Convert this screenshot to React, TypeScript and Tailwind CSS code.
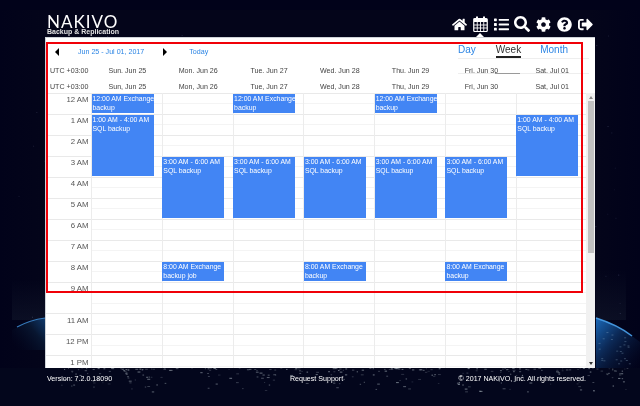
import { FaHome, FaList, FaSearch, FaCog, FaQuestionCircle, FaSignOutAlt } from "react-icons/fa";

const font = { fontFamily: '"Liberation Sans", Arial, sans-serif' };

const days = ["Sun, Jun 25", "Mon, Jun 26", "Tue, Jun 27", "Wed, Jun 28", "Thu, Jun 29", "Fri, Jun 30", "Sat, Jul 01"];
const topDays = ["Sun. Jun 25", "Mon. Jun 26", "Tue. Jun 27", "Wed. Jun 28", "Thu. Jun 29", "Fri. Jun 30", "Sat. Jul 01"];

// row: [label, height in half-hour slots]
const hours: [string, number][] = [
  ["12 AM", 2], ["1 AM", 2], ["2 AM", 2], ["3 AM", 2], ["4 AM", 2], ["5 AM", 2], ["6 AM", 2], ["7 AM", 2], ["8 AM", 2], ["9 AM", 3],
  ["11 AM", 2], ["12 PM", 2], ["1 PM", 2],
];

type Ev = { start: number; span: number; a: string; b: string };
const exch: Ev = { start: 0, span: 2, a: "12:00 AM Exchange", b: "backup" };
const sql1: Ev = { start: 2, span: 6, a: "1:00 AM - 4:00 AM", b: "SQL backup" };
const sql3: Ev = { start: 6, span: 6, a: "3:00 AM - 6:00 AM", b: "SQL backup" };
const ex8: Ev = { start: 16, span: 2, a: "8:00 AM Exchange", b: "backup" };
const events: Ev[][] = [
  [exch, sql1],
  [sql3, { ...ex8, b: "backup job" }],
  [exch, sql3],
  [sql3, ex8],
  [exch, sql3],
  [sql3, ex8],
  [sql1],
];

const SLOT = 10.5;

function seeded(n: number, seed: number) {
  let s = seed;
  const out: number[] = [];
  for (let i = 0; i < n; i++) {
    s = (s * 9301 + 49297) % 233280;
    out.push(s / 233280);
  }
  return out;
}

function CalendarIcon() {
  return (
    <svg width="15" height="16" viewBox="0 0 15 16" fill="none" stroke="white">
      <rect x="0.75" y="2.5" width="13.5" height="13" rx="1" strokeWidth="1.2" />
      <rect x="1" y="3" width="13" height="3" fill="white" stroke="none" />
      <path d="M4 0.5V4M11 0.5V4" strokeWidth="2" />
      <path d="M1 9H14M1 12H14M4.25 6V15M7.5 6V15M10.75 6V15" strokeWidth="0.9" />
    </svg>
  );
}

function Backdrop() {
  const r = seeded(1800, 7);
  const stars = [];
  for (let i = 0; i < 260; i++) {
    const x = r[i * 3] * 640;
    const y = 35 + r[i * 3 + 1] * 300;
    if (x < 18 || x > 622) continue;
    stars.push(<rect key={i} x={x} y={y} width="1" height="1" fill="#8a94b8" opacity={0.1 + r[i * 3 + 2] * 0.2} />);
  }
  const lights = [];
  for (let i = 0; i < 300; i++) {
    const x = 60 + r[900 + i * 2] * 570;
    const y = 368 + r[901 + i * 2] * r[901 + i * 2] * 24;
    if (x > 165 && x < 205 && y > 376) continue;
    lights.push(<rect key={i} x={x} y={y} width={1 + r[i] * 2} height="1" fill="#c6d2d8" opacity={0.15 + r[i + 400] * 0.4} />);
  }
  const sideLights = [];
  for (let i = 0; i < 24; i++) {
    const x = 597 + r[1400 + i * 2] * 35;
    const y = 332 + r[1401 + i * 2] * 36;
    sideLights.push(<rect key={i} x={x} y={y} width="2" height="1" fill="#9fc0dc" opacity={0.3} />);
  }
  return (
    <svg className="absolute inset-0" width="640" height="406" viewBox="0 0 640 406">
      <defs>
        <linearGradient id="earthR" x1="0" y1="0" x2="1" y2="1">
          <stop offset="0" stopColor="#1a68b8" />
          <stop offset="0.4" stopColor="#0c2a58" />
          <stop offset="1" stopColor="#030a24" stopOpacity="0" />
        </linearGradient>
        <linearGradient id="earthL" x1="1" y1="0" x2="0" y2="0.8">
          <stop offset="0" stopColor="#103a6c" />
          <stop offset="0.4" stopColor="#081630" />
          <stop offset="1" stopColor="#030922" stopOpacity="0" />
        </linearGradient>
        <linearGradient id="haze" x1="0" y1="0" x2="0" y2="1">
          <stop offset="0" stopColor="#1b2436" stopOpacity="0" />
          <stop offset="1" stopColor="#1b2436" stopOpacity="0.35" />
        </linearGradient>
        <linearGradient id="side" x1="0" y1="0" x2="1" y2="0">
          <stop offset="0" stopColor="#01021a" />
          <stop offset="0.08" stopColor="#04051a" />
          <stop offset="0.92" stopColor="#04051a" />
          <stop offset="1" stopColor="#01021a" />
        </linearGradient>
      </defs>
      <rect width="640" height="406" fill="#01021a" />
      <rect x="0" y="10" width="640" height="358" fill="url(#side)" />
      <rect x="596" y="270" width="30" height="50" fill="url(#haze)" />
      <rect x="12" y="280" width="33" height="40" fill="url(#haze)" />
      {stars}
      <path d="M596 318 Q620 326 640 342 L640 368 L596 368 Z" fill="url(#earthR)" />
      <path d="M596 318 Q618 325 632 336" fill="none" stroke="#4aa3ee" strokeWidth="1.5" opacity="0.9" />
      <path d="M45 318 Q28 321 12 330 L12 350 L45 350 Z" fill="url(#earthL)" />
      <path d="M45 318 Q30 320 17 327" fill="none" stroke="#3f8fd8" strokeWidth="1.2" opacity="0.85" />
      {sideLights}
      <rect y="368" width="640" height="38" fill="#03061c" />
      {lights}
    </svg>
  );
}

function App() {
  const icons = [FaHome, null, FaList, FaSearch, FaCog, FaQuestionCircle, FaSignOutAlt];
  return (
    <div className="relative w-[640px] h-[406px] overflow-hidden bg-[#01021a] blur-[0.35px]" style={font}>
      <Backdrop />
      <div className="relative flex flex-col h-full px-[45px]">
        {/* Header */}
        <header className="h-[36.5px] flex items-start justify-between shrink-0">
          <div className="pl-[2px] pt-[15px] text-white leading-none">
            <div className="text-[17px] tracking-[1px] leading-[13px] font-normal" style={{ fontFamily: "Lato, sans-serif" }}>NAKIVO</div>
            <div className="text-[7px] font-bold leading-[8px] text-[#e2e2e2]">Backup &amp; Replication</div>
          </div>
          <div className="flex items-center gap-[5px] pt-[16px] pr-[2px] text-white">
            {icons.map((I, i) => (
              <span key={i} className="relative w-[16px] h-[16px] flex items-center justify-center">
                {I ? <I size={i === 3 ? 16 : 15} /> : <CalendarIcon />}
                {i === 1 && (
                  <span className="absolute top-[17px] left-[4px] w-0 h-0 border-l-[4px] border-r-[4px] border-b-[4px] border-l-transparent border-r-transparent border-b-white" />
                )}
              </span>
            ))}
          </div>
        </header>

        {/* Panel */}
        <main className="relative flex flex-col bg-white h-[331.5px] shrink-0 overflow-hidden border-t border-l border-[#cfd3d8]">
          <div className="h-[20px] flex items-center shrink-0 pl-[9px] pt-[9px] text-[#2c85e4] text-[7.1px]">
            <span className="w-0 h-0 border-y-[4px] border-r-[4px] border-y-transparent border-r-black" />
            <span className="ml-[19px]">Jun 25 - Jul 01, 2017</span>
            <span className="ml-[19px] w-0 h-0 border-y-[4px] border-l-[4px] border-y-transparent border-l-black" />
            <span className="ml-[22px]">Today</span>
            <div className="absolute left-[412px] top-[6px] flex items-start text-[10px] leading-[12px]">
              <span>Day</span>
              <span className="ml-[20px] text-[#333] border-b-2 border-[#222]">Week</span>
              <span className="ml-[19px]">Month</span>
            </div>
          </div>
          <div className="ml-[412px] mr-[6px] h-px bg-[#eeeeee] shrink-0" />

          <div className="relative grid grid-cols-[46px_repeat(7,70.8px)] h-[20.5px] pt-[8px] items-start shrink-0 text-[7.1px] leading-[9px] text-[#444]">
            <div className="pl-[4px]">UTC +03:00</div>
            {topDays.map((d) => (
              <div key={d} className="text-center">{d}</div>
            ))}
            <div className="absolute left-[412px] right-[6px] bottom-[5px] h-px bg-[#eeeeee]" />
            <div className="absolute left-[449px] w-[25px] bottom-[5px] h-px bg-[#9a9a9a]" />
          </div>
          <div className="grid grid-cols-[46px_repeat(7,70.8px)] h-[13.5px] pt-[3.5px] items-start shrink-0 text-[7.1px] leading-[9px] text-[#444]">
            <div className="pl-[4px]">UTC +03:00</div>
            {days.map((d) => (
              <div key={d} className="text-center">{d}</div>
            ))}
          </div>

          <div className="flex flex-1 min-h-0">
            <div className="grid grid-cols-[45px_repeat(7,70.8px)] overflow-hidden h-full flex-1">
              <div className="flex flex-col">
                {hours.map(([h, n]) => (
                  <div key={h} className="shrink-0 text-right pr-[2.5px] pt-[1.5px] text-[7.8px] leading-[9px] text-[#555] border-t border-[#e9e9e9]" style={{ height: n * SLOT }}>
                    {h}
                  </div>
                ))}
              </div>
              {events.map((evs, c) => (
                <div key={c} className="relative flex flex-col border-l border-[#ececec]">
                  {hours.map(([h, n]) => (
                    <div key={h} className="shrink-0 flex flex-col border-t border-[#e9e9e9]" style={{ height: n * SLOT }}>
                      {Array.from({ length: n }).map((_, k) => (
                        <div key={k} className={k === n - 1 ? "flex-1" : "flex-1 border-b border-[#f4f4f4]"} />
                      ))}
                    </div>
                  ))}
                  {evs.map((e) => (
                    <div
                      key={e.start}
                      className="absolute left-[-0.5px] w-[62px] bg-[#4285f4] text-white text-[6.9px] leading-[9px] pl-px pt-[0.5px] overflow-hidden whitespace-nowrap"
                      style={{ top: e.start * SLOT + 1, height: e.span * SLOT - 1.5 }}
                    >
                      <div>{e.a}</div>
                      <div>{e.b}</div>
                    </div>
                  ))}
                </div>
              ))}
            </div>
            {/* Scrollbar */}
            <div className="w-[9px] shrink-0 bg-[#f1f1f1] flex flex-col items-center">
              <span className="mt-[3px] w-0 h-0 border-x-[2.5px] border-b-[3px] border-x-transparent border-b-[#8a8a8a]" />
              <span className="mt-[2px] w-[6px] h-[152px] bg-[#c1c1c1]" />
              <span className="mt-auto mb-[3px] w-0 h-0 border-x-[2.5px] border-t-[3px] border-x-transparent border-t-[#333]" />
            </div>
          </div>

          {/* Red annotation */}
          <div className="absolute left-0 top-[4.5px] w-[537px] h-[250.5px] border-2 border-[#f00008] pointer-events-none" />
        </main>

        {/* Footer */}
        <footer className="flex-1 flex items-start justify-between pt-[6px] pl-[2px] pr-[9px] text-white text-[7.1px] leading-[10px]">
          <span className="w-[180px]">Version: 7.2.0.18090</span>
          <span>Request Support</span>
          <span className="w-[180px] text-right">© 2017 NAKIVO, Inc. All rights reserved.</span>
        </footer>
      </div>
    </div>
  );
}

export default App;
